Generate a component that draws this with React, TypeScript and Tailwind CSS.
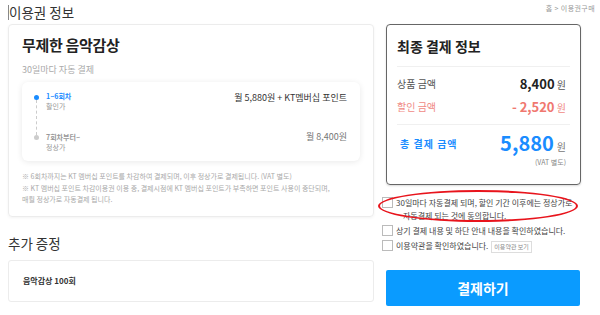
import React from 'react';

const font = { fontFamily: '"Noto Sans CJK KR", "Noto Sans", sans-serif' };

function Check({ children }: { children: React.ReactNode }) {
  return (
    <div className="flex items-start gap-[3px]">
      <span className="mt-[1px] h-[11px] w-[11px] shrink-0 border border-[#bbb] bg-white" />
      <div className="text-[8px] leading-[13px] text-[#444]">{children}</div>
    </div>
  );
}

export default function App() {
  return (
    <div className="relative h-[315px] w-[600px] overflow-hidden bg-white text-[#222]" style={font}>
      {/* header */}
      <div className="flex h-[24px] items-start justify-between pl-[8px] pr-[5px]">
        <div className="flex items-center pt-[3px]">
          <span className="h-[15px] w-px bg-[#888]" />
          <h1 className="text-[13.5px] leading-[18px] text-[#333]">이용권 정보</h1>
        </div>
        <div className="pt-[3px] text-[7px] tracking-[0.4px] text-[#999]">홈 &gt; 이용권구매</div>
      </div>

      <div className="flex gap-[8px] pl-[8px]">
        {/* left column */}
        <div className="w-[366px]">
          <section className="h-[193px] rounded-[4px] border border-[#ececec] px-[13px] pt-[9px] shadow-[0_1px_3px_rgba(0,0,0,0.05)]">
            <h2 className="text-[15px] font-bold leading-[22px] tracking-[-0.3px]">무제한 음악감상</h2>
            <p className="mt-[8px] text-[9px] leading-[12px] text-[#aaa]">30일마다 자동 결제</p>

            <div className="mt-[6px] h-[79px] rounded-[6px] bg-white pl-[12px] pr-[13px] pt-[9px] shadow-[0_1px_6px_rgba(0,0,0,0.09)]">
              <div className="flex">
                <div className="relative flex flex-col items-center pt-[4px]">
                  <span className="h-[5px] w-[5px] rounded-full bg-[#1a8cff]" />
                  <span className="h-[35px] border-l border-dashed border-[#ccc]" />
                  <span className="h-[5px] w-[5px] rounded-full bg-[#ccc]" />
                </div>
                <div className="ml-[7px] flex-1">
                  <div className="flex items-start justify-between">
                    <div>
                      <div className="text-[7px] font-bold leading-[10px] text-[#1a8cff]">1~6회차</div>
                      <div className="text-[7px] leading-[11px] text-[#999]">할인가</div>
                    </div>
                    <div className="pt-[1px] text-[9px] leading-[12px] text-[#333]">월 5,880원 + KT멤버십 포인트</div>
                  </div>
                  <div className="mt-[20px] flex items-start justify-between">
                    <div>
                      <div className="text-[7px] font-bold leading-[10px] text-[#999]">7회차부터~</div>
                      <div className="text-[7px] leading-[11px] text-[#999]">정상가</div>
                    </div>
                    <div className="text-[9px] leading-[10px] text-[#777]">월 8,400원</div>
                  </div>
                </div>
              </div>
            </div>

            <div className="mt-[10px] text-[7px] leading-[11px] text-[#aaa]">
              <p>※ 6회차까지는 KT 멤버십 포인트를 차감하여 결제되며, 이후 정상가로 결제됩니다. (VAT 별도)</p>
              <p className="mt-[1px]">※ KT 멤버십 포인트 차감이용권 이용 중, 결제시점에 KT 멤버십 포인트가 부족하면 포인트 사용이 중단되며,</p>
              <p>매월 정상가로 자동결제 됩니다.</p>
            </div>
          </section>

          <h2 className="mt-[17px] text-[13.5px] leading-[18px] text-[#333]">추가 증정</h2>
          <div className="mt-[8px] flex h-[42px] items-center rounded-[3px] border border-[#ececec] px-[14px]">
            <span className="text-[8px] font-bold text-[#333]">음악감상 100회</span>
          </div>
        </div>

        {/* right column */}
        <div className="w-[200px]">
          <section className="ml-[4px] h-[161px] w-[195px] rounded-[4px] border-[1.5px] border-[#666] px-[10px] pt-[11px] shadow-[0_1px_2px_rgba(0,0,0,0.15)]">
            <h2 className="text-[14px] font-bold leading-[20px]">최종 결제 정보</h2>
            <div className="mt-[10px] border-t border-[#f0f0f0]" />
            <div className="mt-[7px] flex items-center justify-between pr-[4px]">
              <span className="text-[10px] text-[#555]">상품 금액</span>
              <span className="text-[10px] text-[#555]">
                <b className="text-[13px] text-[#222]">8,400</b> 원
              </span>
            </div>
            <div className="mt-[3px] flex items-center justify-between pr-[4px]">
              <span className="text-[10px] text-[#f08a85]">할인 금액</span>
              <span className="text-[10px] text-[#f08a85]">
                <b className="text-[13px] text-[#f07870]">- 2,520</b> 원
              </span>
            </div>
            <div className="mt-[8px] border-t border-[#f0f0f0]" />
            <div className="mt-[6px] flex h-[24px] items-center justify-between pr-[4px]">
              <span className="pl-[3px] text-[10px] font-bold tracking-[1px] text-[#1a8cff]">총 결제 금액</span>
              <span className="flex items-baseline gap-[3px] leading-none">
                <b className="text-[20px] text-[#1a8cff]">5,880</b>
                <span className="text-[10px] text-[#777]">원</span>
              </span>
            </div>
            <div className="mt-[3px] pr-[4px] text-right text-[7px] leading-[9px] text-[#888]">(VAT 별도)</div>
          </section>

          <div className="mt-[11px] flex flex-col gap-[2px]">
            <Check>
              30일마다 자동결제 되며, 할인 기간 이후에는 정상가로
              <br />
              <span className="pl-[7px]">자동결제 되는 것에 동의합니다.</span>
            </Check>
            <Check>상기 결제 내용 및 하단 안내 내용을 확인하였습니다.</Check>
            <Check>
              이용약관을 확인하였습니다.
              <span className="ml-[3px] inline-block border border-[#ddd] px-[2px] text-[6px] leading-[10px] text-[#888]">이용약관 보기</span>
            </Check>
          </div>

          <button className="ml-[4px] mt-[17px] h-[36px] w-[194px] rounded-[2px] bg-[#0a9bff] text-[14px] font-bold text-white">
            결제하기
          </button>
        </div>
      </div>

      {/* annotation */}
      <div className="absolute left-[378px] top-[190px] h-[32px] w-[200px] rounded-[50%] border-2 border-[#e8141c]" />
    </div>
  );
}
